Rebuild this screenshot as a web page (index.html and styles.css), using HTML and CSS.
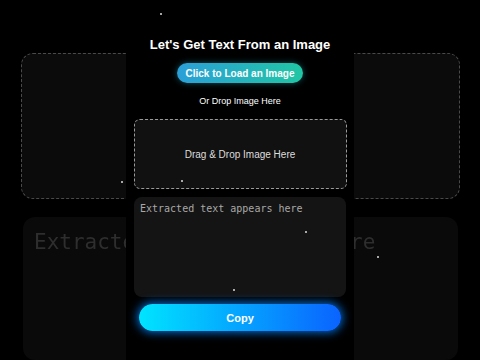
FILE: index.html
```html
<!DOCTYPE html>
<html lang="en">
<head>
  <meta charset="UTF-8">
  <meta name="viewport" content="width=device-width, initial-scale=1">
  <title>Image to Text</title>
  <link rel="stylesheet" href="styles.css">
</head>
<body>

  <!-- blurred copy behind the short -->
  <div class="backdrop">
    <div class="bg-drop"></div>
    <div class="bg-output">Extracted text appears here</div>
  </div>

  <main class="panel">
    <h1>Let's Get Text From an Image</h1>
    <button class="load-btn">Click to Load an Image</button>
    <p class="hint">Or Drop Image Here</p>
    <div class="drop-zone">Drag &amp; Drop Image Here</div>
    <textarea class="output" placeholder="Extracted text appears here"></textarea>
    <button class="copy-btn">Copy</button>
  </main>

  <!-- floating particles -->
  <span class="dot" style="left:160px;top:13px"></span>
  <span class="dot" style="left:181px;top:180px"></span>
  <span class="dot" style="left:121px;top:181px"></span>
  <span class="dot" style="left:305px;top:231px"></span>
  <span class="dot" style="left:377px;top:256px"></span>
  <span class="dot" style="left:233px;top:289px"></span>

</body>
</html>
```

FILE: styles.css
```css
* {
  margin: 0;
  padding: 0;
  box-sizing: border-box;
}

html, body {
  height: 100%;
  overflow: hidden;
}

body {
  background: #000;
  font-family: "Liberation Sans", Arial, sans-serif;
  color: #fff;
  position: relative;
}

/* background, zoomed and dimmed */
.backdrop {
  position: absolute;
  inset: 0;
  padding: 53px 20px 0 21px;
  display: flex;
  flex-direction: column;
  gap: 18px;
  filter: blur(0.6px);
}

.bg-drop {
  height: 146px;
  border: 1px dashed #4a4a4a;
  border-radius: 12px;
  background: #0b0b0b;
}

.bg-output {
  flex: 1;
  margin: 0 2px;
  border-radius: 12px;
  background: #0a0a0a;
  padding: 13px 11px;
  font-family: "DejaVu Sans Mono", monospace;
  font-size: 21px;
  color: #2e2e2e;
  white-space: nowrap;
}

.panel {
  position: relative;
  width: 228px;
  height: 100%;
  margin: 0 auto;
  background: #000;
  display: flex;
  flex-direction: column;
  align-items: center;
  padding-top: 36px;
}

h1 {
  font-size: 13px;
  line-height: 18px;
  font-weight: bold;
}

.load-btn {
  margin-top: 9px;
  height: 20px;
  padding: 0 9px;
  border: none;
  border-radius: 10px;
  background: linear-gradient(to right, #2b9fd8, #20c6a4);
  color: #fff;
  font-family: inherit;
  font-size: 10px;
  font-weight: bold;
  box-shadow: 0 0 6px rgba(40, 180, 200, 0.45);
}

.hint {
  margin-top: 12px;
  font-size: 9px;
  line-height: 12px;
}

.drop-zone {
  margin-top: 12px;
  width: 213px;
  height: 70px;
  border: 1px dashed #9a9a9a;
  border-radius: 6px;
  background: #111;
  display: flex;
  align-items: center;
  justify-content: center;
  font-size: 10px;
  color: #ddd;
}

.output {
  margin-top: 8px;
  width: 212px;
  height: 100px;
  border: none;
  border-radius: 8px;
  background: #141414;
  padding: 6px 6px;
  resize: none;
  font-family: "DejaVu Sans Mono", monospace;
  font-size: 10px;
  color: #ccc;
}

.output::placeholder {
  color: #a8a8a8;
}

.copy-btn {
  margin-top: 7px;
  width: 202px;
  height: 27px;
  border: none;
  border-radius: 14px;
  background: linear-gradient(to right, #00e4ff, #0a63ff);
  color: #fff;
  font-family: inherit;
  font-size: 11px;
  font-weight: bold;
  box-shadow: 0 0 8px 2px rgba(0, 130, 255, 0.75);
}

.dot {
  position: absolute;
  width: 2px;
  height: 2px;
  background: #ddd;
  border-radius: 50%;
}
```
